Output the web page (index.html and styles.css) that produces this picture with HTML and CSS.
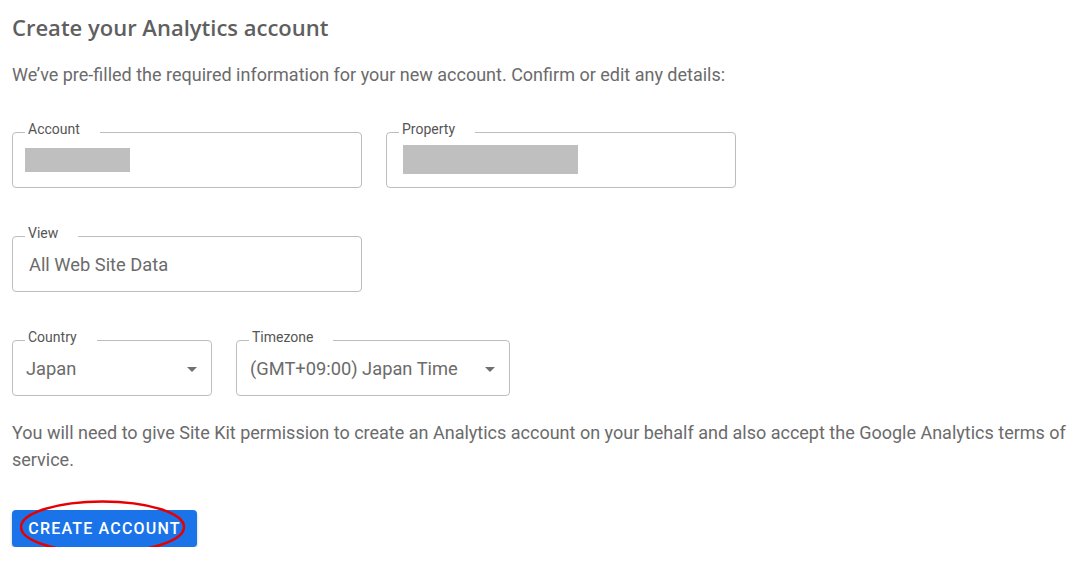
FILE: index.html
```html
<!DOCTYPE html>
<html>
<head>
<meta charset="utf-8">
<link rel="stylesheet" href="styles.css">
</head>
<body>
<div class="page">
  <h1 class="title">Create your Analytics account</h1>
  <p class="intro">We’ve pre-filled the required information for your new account. Confirm or edit any details:</p>

  <div class="row row-first">
    <div class="field w350">
      <span class="label">Account</span>
      <span class="redact redact-account"></span>
    </div>
    <div class="field w350">
      <span class="label">Property</span>
      <span class="redact redact-property"></span>
    </div>
  </div>

  <div class="row">
    <div class="field w350">
      <span class="label">View</span>
      <span class="value">All Web Site Data</span>
    </div>
  </div>

  <div class="row">
    <div class="field select w200">
      <span class="label">Country</span>
      <span class="value">Japan</span>
      <span class="arrow"></span>
    </div>
    <div class="field select w274">
      <span class="label">Timezone</span>
      <span class="value">(GMT+09:00) Japan Time</span>
      <span class="arrow"></span>
    </div>
  </div>

  <p class="note">You will need to give Site Kit permission to create an Analytics account on your behalf and also accept the Google Analytics terms of service.</p>

  <div class="btn-wrap">
    <button class="btn">Create Account</button>
    <svg class="circle" width="170" height="56" viewBox="0 0 170 56">
      <ellipse cx="82.5" cy="27" rx="81.5" ry="25.5" fill="none" stroke="#e60000" stroke-width="2.5"/>
    </svg>
  </div>
</div>
</body>
</html>
```

FILE: styles.css
```css
html, body {
  margin: 0;
  padding: 0;
  background: #ffffff;
}

.page {
  padding: 13px 0 0 12px;
  font-family: Roboto, "Liberation Sans", sans-serif;
  color: #6b6b6b;
}

.title {
  margin: 0;
  font-family: "Open Sans", Roboto, sans-serif;
  font-weight: 600;
  font-size: 22px;
  line-height: 28px;
  color: #5f5f5f;
  letter-spacing: 0;
}

.intro {
  margin: 22px 0 0 0;
  font-size: 18px;
  line-height: 24px;
}

.row {
  display: flex;
  gap: 24px;
  margin-top: 48px;
}

.row-first {
  margin-top: 45px;
}

.field {
  position: relative;
  box-sizing: border-box;
  height: 56px;
  border: 1px solid #bdbdbd;
  border-radius: 4px;
  display: flex;
  align-items: center;
  padding-left: 16px;
}

.w350 { width: 350px; }
.w200 { width: 200px; }
.w274 { width: 274px; }

.select {
  padding-left: 13px;
}

.label {
  position: absolute;
  top: -13px;
  left: 12px;
  padding: 0 20px 0 3px;
  background: #ffffff;
  font-size: 14px;
  line-height: 18px;
  color: #555555;
}

.value {
  font-size: 18.3px;
  color: #6b6b6b;
}

.redact {
  display: block;
  background: #bfbfbf;
}

.redact-account {
  width: 105px;
  height: 24px;
  margin-left: -4px;
}

.redact-property {
  width: 175px;
  height: 29px;
  margin-top: -2px;
}

.arrow {
  position: absolute;
  right: 14px;
  top: 26px;
  width: 0;
  height: 0;
  border-left: 5px solid transparent;
  border-right: 5px solid transparent;
  border-top: 5px solid #707070;
}

.note {
  margin: 23px 0 0 0;
  font-size: 18px;
  line-height: 27px;
}

.btn-wrap {
  position: relative;
  margin-top: 37px;
  width: 185px;
}

.btn {
  display: block;
  box-sizing: border-box;
  width: 185px;
  height: 37px;
  border: none;
  border-radius: 4px;
  background: #1a73e8;
  color: #ffffff;
  font-family: Roboto, sans-serif;
  font-weight: 500;
  font-size: 16px;
  letter-spacing: 1.2px;
  text-transform: uppercase;
  box-shadow: 0 2px 3px rgba(0,0,0,0.25);
  padding: 0;
}

.circle {
  position: absolute;
  left: 8px;
  top: -10px;
  pointer-events: none;
}
```
